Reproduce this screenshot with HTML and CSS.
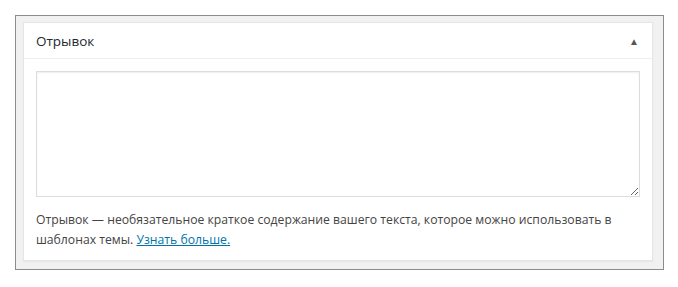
FILE: index.html
```html
<!DOCTYPE html>
<html lang="ru">
<head>
  <meta charset="UTF-8">
  <title>Отрывок</title>
  <link rel="stylesheet" href="styles.css">
</head>
<body>
  <div class="frame">
    <div class="postbox">
      <div class="postbox-header">
        <h2 class="hndle">Отрывок</h2>
        <span class="toggle">&#9650;</span>
      </div>
      <div class="inside">
        <textarea class="excerpt" rows="1" cols="40"></textarea>
        <p class="hint">Отрывок — необязательное краткое содержание вашего текста, которое можно использовать в шаблонах темы. <a href="#">Узнать больше.</a></p>
      </div>
    </div>
  </div>
</body>
</html>
```

FILE: styles.css
```css
body {
  margin: 0;
  padding: 15px 15px 0 15px;
  background: #fff;
  font-family: "Open Sans", "Noto Sans", sans-serif;
  color: #444;
}

.frame {
  width: 630px;
  border: 1px solid #8c8c8c;
  background: #f1f1f1;
  padding: 6px 10px 8px 7px;
}

.postbox {
  background: #fff;
  border: 1px solid #e5e5e5;
  box-shadow: 0 1px 1px rgba(0, 0, 0, 0.04);
}

.postbox-header {
  display: flex;
  align-items: center;
  justify-content: space-between;
  height: 35px;
  border-bottom: 1px solid #eee;
  padding: 0 12px;
}

.hndle {
  margin: 0;
  font-size: 13.5px;
  font-weight: normal;
  color: #23282d;
}

.toggle {
  font-size: 10px;
  color: #555;
  margin-right: 1px;
}

.inside {
  padding: 12px 12px 10px 12px;
}

.excerpt {
  display: block;
  box-sizing: border-box;
  width: 100%;
  height: 126px;
  margin: 0;
  border: 1px solid #ddd;
  box-shadow: inset 0 1px 2px rgba(0, 0, 0, 0.07);
  resize: vertical;
}

.hint {
  margin: 13px 0 0 0;
  font-size: 12.2px;
  line-height: 20px;
  color: #444;
}

.hint a {
  color: #0073aa;
}
```
